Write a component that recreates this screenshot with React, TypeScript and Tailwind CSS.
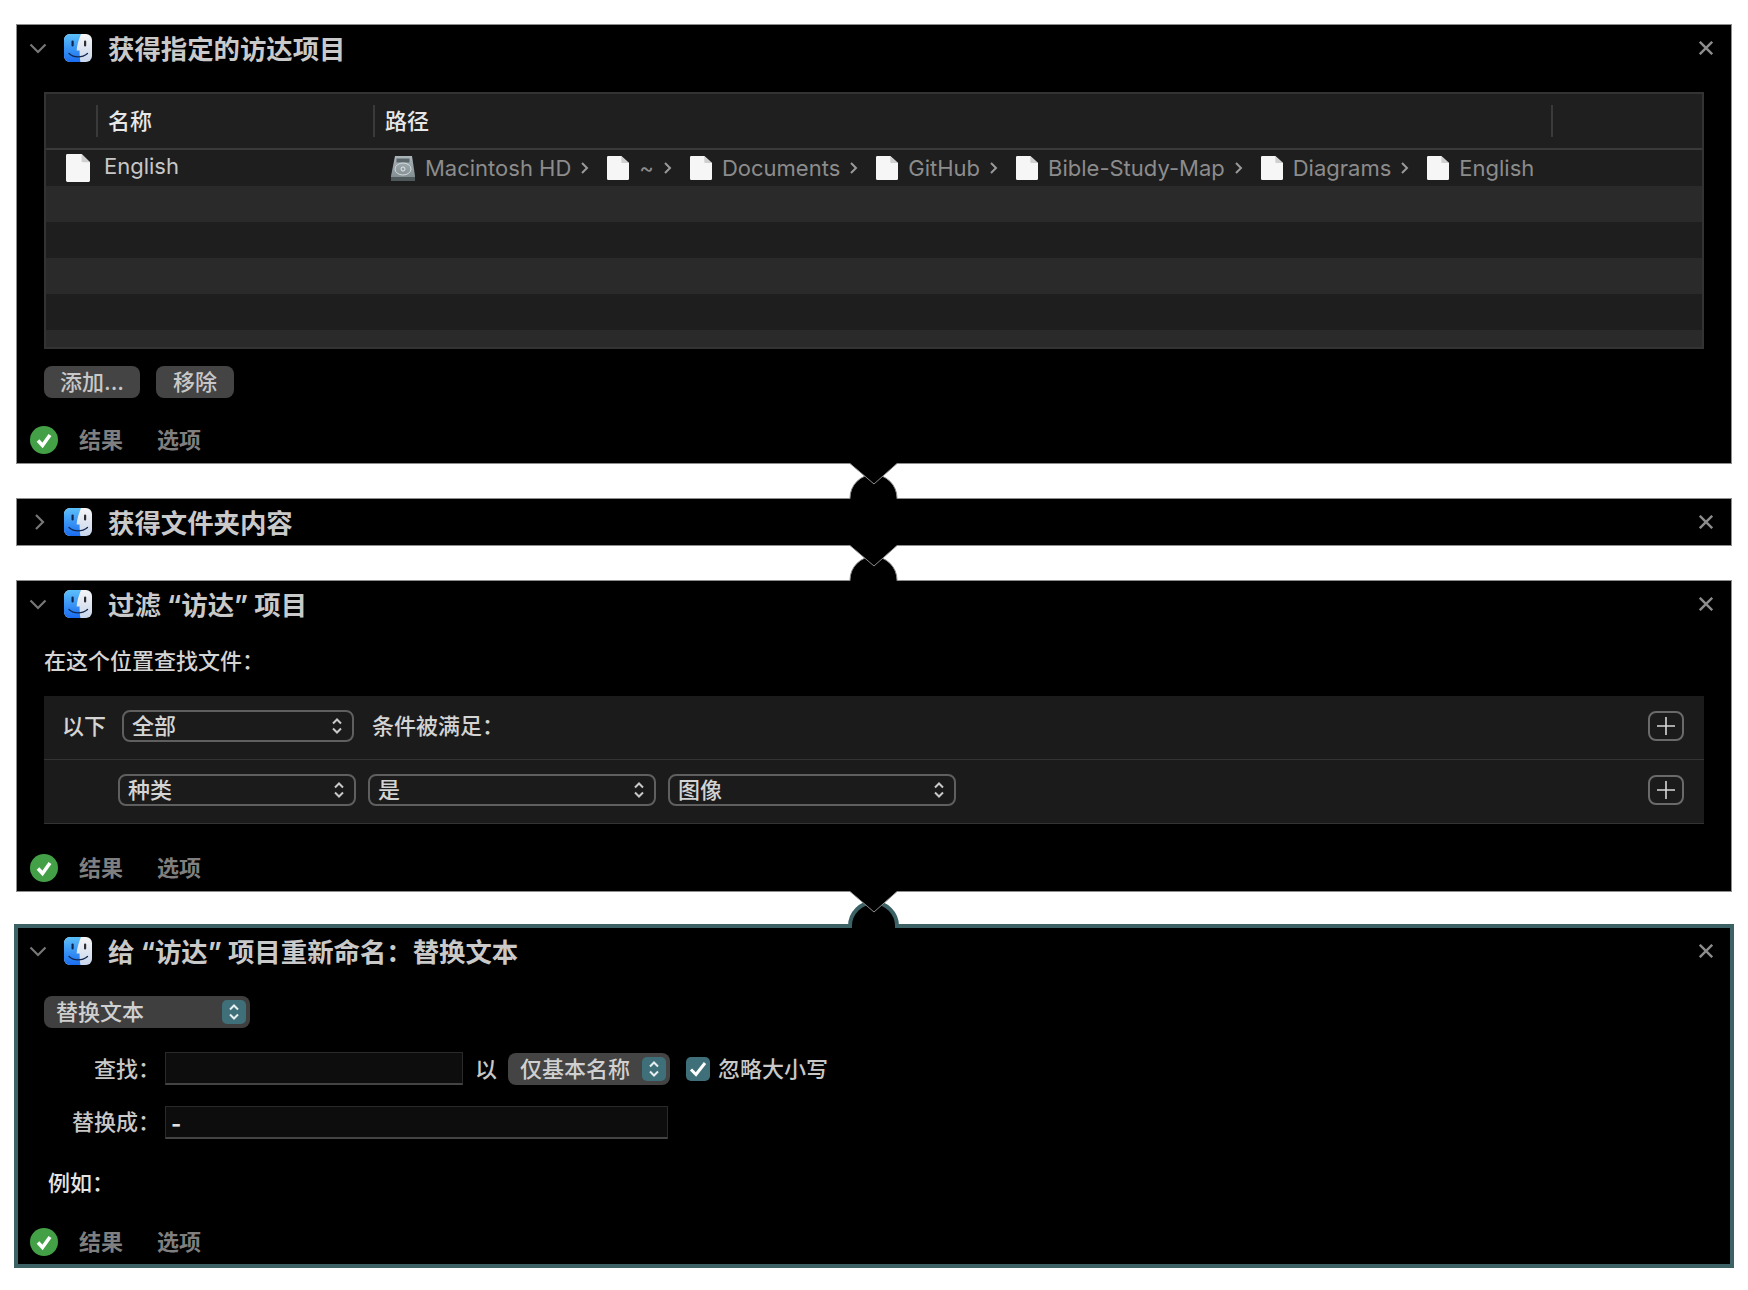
import type { ReactNode } from "react";

const font = "font-['Inter','Noto_Sans_CJK_SC',sans-serif]";

function FinderIcon() {
  return (
    <svg width="28" height="28" viewBox="0 0 28 28" className="shrink-0">
      <defs>
        <linearGradient id="finderBlue" x1="0" y1="0" x2="0" y2="1">
          <stop offset="0" stopColor="#5cc0fa" />
          <stop offset="1" stopColor="#1a6cf0" />
        </linearGradient>
        <linearGradient id="finderPale" x1="0" y1="0" x2="0" y2="1">
          <stop offset="0" stopColor="#f6f6f7" />
          <stop offset="1" stopColor="#c9d6ec" />
        </linearGradient>
      </defs>
      <rect width="28" height="28" rx="6" fill="url(#finderPale)" />
      <path d="M6 0H17C15 5 13 11 12.6 16.5H15.6C15.6 20 15.8 24 16.4 28H6A6 6 0 0 1 0 22V6A6 6 0 0 1 6 0Z" fill="url(#finderBlue)" />
      <rect x="7.5" y="6.5" width="2.2" height="6" rx="1.1" fill="#10264f" />
      <rect x="20" y="6.5" width="2.2" height="6" rx="1.1" fill="#2d2d33" />
      <path d="M5 19.5C10 24 18 24 23.5 19.5" fill="none" stroke="#10264f" strokeWidth="1.3" strokeLinecap="round" />
    </svg>
  );
}

function FileIcon({ w = 22, h = 24 }: { w?: number; h?: number }) {
  return (
    <svg width={w} height={h} viewBox="0 0 20 24" preserveAspectRatio="none" className="shrink-0">
      <path d="M1.2 0H13L20 7V22.8A1.2 1.2 0 0 1 18.8 24H1.2A1.2 1.2 0 0 1 0 22.8V1.2A1.2 1.2 0 0 1 1.2 0Z" fill="#f6f6f6" />
      <path d="M13 0L20 7H14A1 1 0 0 1 13 6Z" fill="#cfcfcf" />
    </svg>
  );
}

function DiskIcon() {
  return (
    <svg width="24" height="25" viewBox="0 0 24 25" className="shrink-0">
      <defs>
        <linearGradient id="disk" x1="0" y1="0" x2="0" y2="1">
          <stop offset="0" stopColor="#aab6ba" />
          <stop offset="1" stopColor="#7c878b" />
        </linearGradient>
      </defs>
      <path d="M4 0H21L24 20V25H0V20Z" fill="url(#disk)" />
      <rect x="5.5" y="2.5" width="13" height="4" fill="#5c666a" />
      <ellipse cx="12" cy="13" rx="8" ry="6" fill="none" stroke="#d2dadd" strokeWidth="1" />
      <circle cx="12" cy="13" r="2" fill="none" stroke="#e1e6e8" strokeWidth="1" />
      <rect x="0" y="21" width="24" height="4" fill="#4f585b" />
    </svg>
  );
}

function Header({ title, collapsed }: { title: string; collapsed?: boolean }) {
  return (
    <div className="flex h-[46px] items-center pr-[18px] pl-3">
      <svg width="18" height="18" viewBox="0 0 18 18" className="shrink-0" fill="none" stroke="#777" strokeWidth="2.2">
        {collapsed ? <path d="M7 2L14 9L7 16" /> : <path d="M1.5 5.5L9 13L16.5 5.5" />}
      </svg>
      <div className="ml-[17px]">
        <FinderIcon />
      </div>
      <span className="mt-[2px] ml-4 text-[26.4px] leading-[34px] font-bold whitespace-pre text-[#c9c9c9]">{title}</span>
      <svg width="14" height="14" viewBox="0 0 14 14" className="ml-auto shrink-0" stroke="#8c8c8c" strokeWidth="2.4">
        <path d="M0.8 0.8L13.2 13.2M13.2 0.8L0.8 13.2" />
      </svg>
    </div>
  );
}

function Footer() {
  return (
    <div className="flex h-[44px] items-center pl-[13px] text-[22px] font-bold text-[#7f7f7f]">
      <svg width="28" height="28" viewBox="0 0 28 28" className="shrink-0">
        <circle cx="14" cy="14" r="14" fill="#43a047" />
        <path d="M8 14.5L12.5 19.5L20 9" fill="none" stroke="#fff" strokeWidth="3.6" />
      </svg>
      <span className="ml-[21px]">结果</span>
      <span className="ml-[34px]">选项</span>
    </div>
  );
}

function Panel({ children, selected }: { children: ReactNode; selected?: boolean }) {
  return selected ? (
    <div className="-mx-[2px] border-4 border-[#3c6265] bg-black">
      <div className="-mx-px">{children}</div>
    </div>
  ) : (
    <div className="border border-[#8d8d8d] bg-black">{children}</div>
  );
}

function Connector({ selected }: { selected?: boolean }) {
  return selected ? (
    <svg width="54" height="37" viewBox="0 0 54 37" className="relative z-10 mx-auto -mt-px -mb-[4px] block">
      <path d="M3 36V35A23.5 23.5 0 0 1 50 35V36Z" fill="#000" stroke="#3c6265" strokeWidth="4" />
      <rect x="5" y="34" width="43" height="3" fill="#000" />
      <path d="M3 0H50V0.5L27 21L3 0.5Z" fill="#000" />
      <path d="M3 0.5L27 21L50 0.5" fill="none" stroke="#8d8d8d" strokeWidth="1" />
    </svg>
  ) : (
    <svg width="54" height="36" viewBox="0 0 54 36" className="relative z-10 mx-auto -my-px block">
      <path d="M3 36V35A23.5 23.5 0 0 1 50 35V36Z" fill="#000" stroke="#8d8d8d" strokeWidth="1" />
      <rect x="3.5" y="35" width="46" height="1" fill="#000" />
      <path d="M3 0H50V0.5L27 21L3 0.5Z" fill="#000" />
      <path d="M3 0.5L27 21L50 0.5" fill="none" stroke="#8d8d8d" strokeWidth="1" />
    </svg>
  );
}

function UpDown({ color = "#c8c8c8" }: { color?: string }) {
  return (
    <svg width="12" height="18" viewBox="0 0 12 18" fill="none" stroke={color} strokeWidth="2" className="shrink-0">
      <path d="M2 6.5L6 2.5L10 6.5M2 11.5L6 15.5L10 11.5" />
    </svg>
  );
}

function Select({ label, width }: { label: string; width: string }) {
  return (
    <div className={`flex h-8 items-center justify-between rounded-lg border-2 border-[#5f5f5f] pr-[9px] pl-2 text-[22px] font-medium text-[#d4d4d4] ${width}`}>
      <span>{label}</span>
      <UpDown />
    </div>
  );
}

function Stepper() {
  return (
    <div className="flex h-6 w-6 items-center justify-center rounded-[5px] bg-[#3f6f78]">
      <UpDown color="#e6eef0" />
    </div>
  );
}

function PlusButton() {
  return (
    <div className="flex h-[30px] w-9 items-center justify-center rounded-lg border-2 border-[#6a6a6a]">
      <svg width="18" height="18" viewBox="0 0 18 18" stroke="#d8d8d8" strokeWidth="1.6">
        <path d="M0 9H18M9 0V18" />
      </svg>
    </div>
  );
}

function Crumb({ name, icon, last }: { name: string; icon?: ReactNode; last?: boolean }) {
  return (
    <div className="flex items-center">
      {icon ?? <FileIcon />}
      <span className="ml-[10px]">{name}</span>
      {!last && (
        <svg width="9" height="14" viewBox="0 0 9 14" fill="none" stroke="#9a9a9a" strokeWidth="2" className="mr-[18px] ml-[9px]">
          <path d="M2 2L7 7L2 12" />
        </svg>
      )}
    </div>
  );
}

function FinderTable() {
  return (
    <div className="mx-[27px] border-2 border-[#333]">
      <div className="flex h-[54px] items-center bg-[#1f1f1f] text-[22px] font-medium text-[#e8e8e8]">
        <div className="w-[50px]" />
        <div className="flex h-8 w-[277px] items-center border-l-2 border-[#3a3a3a] pt-px pl-[10px]">名称</div>
        <div className="flex h-8 w-[1178px] items-center border-l-2 border-[#3a3a3a] pt-px pl-[10px]">路径</div>
        <div className="h-8 border-l-2 border-[#3a3a3a]" />
      </div>
      <div className="h-[2px] bg-[#3a3a3a]" />
      <div className="flex h-9 items-center bg-[#1e1e1e] text-[22px]">
        <div className="flex w-[328px] items-center pl-5 text-[#c8c8c8]">
          <FileIcon w={24} h={28} />
          <span className="ml-[14px] -translate-y-[2px]">English</span>
        </div>
        <div className="flex items-center pl-[17px] text-[#8c8c8c]">
          <Crumb name="Macintosh HD" icon={<DiskIcon />} />
          <Crumb name="~" />
          <Crumb name="Documents" />
          <Crumb name="GitHub" />
          <Crumb name="Bible-Study-Map" />
          <Crumb name="Diagrams" />
          <Crumb name="English" last />
        </div>
      </div>
      <div className="h-9 bg-[#2a2a2a]" />
      <div className="h-9 bg-[#1e1e1e]" />
      <div className="h-9 bg-[#2a2a2a]" />
      <div className="h-9 bg-[#1e1e1e]" />
      <div className="h-[17px] bg-[#2a2a2a]" />
    </div>
  );
}

export default function App() {
  return (
    <div className={`h-[1290px] w-[1748px] bg-white px-4 pt-6 ${font}`}>
      <Panel>
        <Header title="获得指定的访达项目" />
        <div className="mt-[21px]">
          <FinderTable />
        </div>
        <div className="mt-[17px] ml-[27px] flex gap-4 text-[22px] font-medium text-[#c8c8c8]">
          <div className="flex h-8 w-24 items-center justify-center rounded-lg bg-[#444]">添加...</div>
          <div className="flex h-8 w-[78px] items-center justify-center rounded-lg bg-[#444]">移除</div>
        </div>
        <div className="mt-5 pb-px">
          <Footer />
        </div>
      </Panel>

      <Connector />

      <Panel>
        <Header title="获得文件夹内容" collapsed />
      </Panel>

      <Connector />

      <Panel>
        <Header title="过滤 “访达” 项目" />
        <div className="mt-[19px] ml-[27px] text-[22px] leading-[30px] font-medium text-[#d4d4d4]">在这个位置查找文件：</div>
        <div className="mx-[27px] mt-5 bg-[#1b1b1b] text-[22px] font-medium text-[#d4d4d4]">
          <div className="flex h-16 items-center border-b border-[#333] pr-5 pb-[3px] pl-[18px]">
            <span>以下</span>
            <div className="ml-4">
              <Select label="全部" width="w-[232px]" />
            </div>
            <span className="ml-[18px]">条件被满足：</span>
            <div className="ml-auto">
              <PlusButton />
            </div>
          </div>
          <div className="flex h-16 items-center gap-3 border-b border-[#333] pr-5 pb-[3px] pl-[74px]">
            <Select label="种类" width="w-[238px]" />
            <Select label="是" width="w-[288px]" />
            <Select label="图像" width="w-[288px]" />
            <div className="ml-auto">
              <PlusButton />
            </div>
          </div>
        </div>
        <div className="mt-[22px] pb-px">
          <Footer />
        </div>
      </Panel>

      <Connector selected />

      <Panel selected>
        <Header title="给 “访达” 项目重新命名：替换文本" />
        <div className="mt-[22px] ml-[27px] flex h-8 w-[206px] items-center justify-between rounded-lg bg-[#3f3f3f] pr-1 pl-3 text-[22px] font-medium text-[#d0d0d0]">
          <span>替换文本</span>
          <Stepper />
        </div>
        <div className="mt-6 flex h-[34px] items-center text-[22px] font-medium text-[#c8c8c8]">
          <span className="w-[143px] text-right">查找：</span>
          <div className="ml-[5px] h-[33px] w-[298px] self-start border border-b-2 border-[#2a2a2a] border-b-[#444] bg-[#0d0d0d]" />
          <span className="ml-3">以</span>
          <div className="ml-[11px] flex h-8 w-[162px] items-center justify-between rounded-lg bg-[#444] pr-1 pl-3 text-[#d0d0d0]">
            <span>仅基本名称</span>
            <Stepper />
          </div>
          <div className="ml-4 flex h-6 w-6 items-center justify-center rounded-[5px] bg-[#3f6f78]">
            <svg width="18" height="16" viewBox="0 0 18 16" fill="none" stroke="#fff" strokeWidth="3">
              <path d="M2 8.5L7 13.5L16 2" />
            </svg>
          </div>
          <span className="ml-2">忽略大小写</span>
        </div>
        <div className="mt-5 flex h-[33px] items-center text-[22px] font-medium text-[#c8c8c8]">
          <span className="w-[143px] text-right">替换成：</span>
          <div className="ml-[5px] flex h-[33px] w-[503px] items-center border border-b-2 border-[#2a2a2a] border-b-[#444] bg-[#0d0d0d] pl-[5px] font-bold text-[#e0e0e0]">
            <span className="translate-y-[2px]">-</span>
          </div>
        </div>
        <div className="mt-[29px] ml-[31px] text-[22px] leading-[30px] font-medium text-[#e4e4e4]">例如：</div>
        <div className="mt-[22px]">
          <Footer />
        </div>
      </Panel>
    </div>
  );
}
